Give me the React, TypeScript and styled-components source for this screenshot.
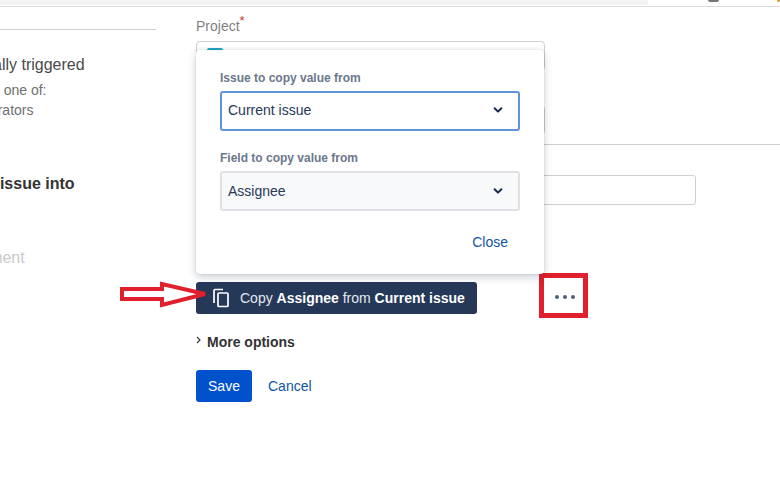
import React from "react";
import styled, { createGlobalStyle } from "styled-components";

const Global = createGlobalStyle`
  html, body { margin: 0; padding: 0; background: #fff; }
  body { font-family: "Liberation Sans", Arial, sans-serif; color: #172b4d; }
`;
const Page = styled.div`
  width: 780px; height: 492px; overflow: hidden; position: relative; background: #fff;
`;
const TopBar = styled.div`
  height: 6px; border-bottom: 1px solid #dcdcdc; display: flex; justify-content: space-between;
`;
const TopStrip = styled.div`width: 648px; height: 5px; background: #f2f2f2;`;
const TopMarks = styled.div`display: flex; gap: 58px; width: 72px; justify-content: flex-end;`;
const TopMark = styled.span<{ $c: string; $w: number }>`
  width: ${p => p.$w}px; height: 2px; background: ${p => p.$c}; border-radius: 0 0 6px 6px;
`;
const Columns = styled.div`display: grid; grid-template-columns: 156px 1fr; column-gap: 40px;`;
const Side = styled.aside`overflow: hidden; padding-top: 22px;`;
const SideRule = styled.div`height: 1px; background: #d0d0d0; margin-bottom: 25px;`;
const SideText = styled.div<{ $size: number; $h: number; $c: string; $b?: boolean; $mt?: number; $ml: number }>`
  font-size: ${p => p.$size}px; line-height: ${p => p.$h}px; color: ${p => p.$c};
  font-weight: ${p => (p.$b ? 700 : 400)}; margin-top: ${p => p.$mt ?? 0}px; margin-left: ${p => p.$ml}px;
  white-space: nowrap;
`;
const Main = styled.main`position: relative; padding-top: 9px; height: 470px;`;
const Label = styled.div`font-size: 14px; line-height: 20px; color: #7f7f7f; height: 25px;`;
const Req = styled.sup`color: #c0392b; font-size: 13px; line-height: 0;`;
const OuterSelect = styled.div<{ $mt?: number; $h: number }>`
  width: 349px; height: ${p => p.$h}px; box-sizing: border-box; border: 1px solid #cfcfcf; border-radius: 4px;
  margin-top: ${p => p.$mt ?? 0}px; position: relative;
`;
const TealMark = styled.span`position: absolute; left: 10px; top: 6px; width: 16px; height: 3px; background: #1fa5c4; border-radius: 2px 2px 0 0;`;
const Divider = styled.div`height: 1px; background: #cfcfcf; margin-top: 9px;`;
const TextInput = styled.div`
  width: 500px; height: 30px; box-sizing: border-box; border: 1px solid #cfcfcf; border-radius: 3px; margin-top: 30px;
`;
const ButtonRow = styled.div`display: flex; align-items: center; margin-top: 77px; position: relative; height: 32px;`;
const CopyButton = styled.button`
  width: 281px; height: 32px; border: 0; border-radius: 3px; background: #253858; color: #e4e9f1; padding: 0 0 0 16px;
  display: flex; align-items: center; gap: 10px; font: 14px/20px "Liberation Sans", Arial, sans-serif; white-space: nowrap;
  b { color: #fff; font-weight: 700; }
`;
const Dots = styled.div`display: flex; gap: 4px; margin-left: 78px; margin-top: -2px; align-items: center;`;
const Dot = styled.span`width: 4px; height: 4px; border-radius: 50%; background: #505f79;`;
const RedBox = styled.div`
  position: absolute; left: 343px; top: -9px; width: 49px; height: 45px; box-sizing: border-box; border: 5px solid #e0202c;
`;
const ArrowMark = styled.svg`position: absolute; left: -76px; top: -1px;`;
const MoreRow = styled.div`
  display: flex; align-items: center; gap: 6px; margin-top: 18px; height: 20px; color: #333;
  font-size: 14px; font-weight: 700;
`;
const Actions = styled.div`display: flex; align-items: center; gap: 16px; margin-top: 18px;`;
const SaveButton = styled.button`
  width: 56px; height: 32px; border: 0; border-radius: 3px; background: #0052cc; color: #fff;
  font: 14px "Liberation Sans", Arial, sans-serif; padding: 0;
`;
const LinkText = styled.span`color: #0f55a8; font-size: 14px;`;
const Popover = styled.div`
  position: absolute; left: 0; top: 43px; width: 348px; height: 224px; box-sizing: border-box; background: #fff;
  border-radius: 4px; box-shadow: 0 3px 8px rgba(9,30,66,.22), 0 0 2px rgba(9,30,66,.14); padding: 20px 24px 0;
  display: flex; flex-direction: column;
`;
const PopLabel = styled.div<{ $mt?: number }>`
  font-size: 12px; font-weight: 700; line-height: 16px; color: #6b778c; margin-top: ${p => p.$mt ?? 0}px; margin-bottom: 5px;
`;
const PopSelect = styled.div<{ $focus?: boolean }>`
  width: 300px; height: 40px; box-sizing: border-box; border-radius: 3px; display: flex; align-items: center; justify-content: space-between;
  padding: ${p => (p.$focus ? "0 15px 2px 6px" : "0 15px 0 6px")}; font-size: 14px; color: #253858;
  background: ${p => (p.$focus ? "#fff" : "#f7f9fb")};
  border: 2px solid ${p => (p.$focus ? "#5b95dc" : "#dfe1e6")};
`;
const CloseRow = styled.div`display: flex; justify-content: flex-end; margin-top: 23px; padding-right: 12px;`;

const Chevron = () => (
  <svg width="10" height="10" viewBox="0 0 10 10" fill="none">
    <path d="M1.6 3.2 5 6.6l3.4-3.4" stroke="#172b4d" strokeWidth="2" strokeLinecap="round" strokeLinejoin="round" />
  </svg>
);

export default function App() {
  return (
    <Page>
      <Global />
      <TopBar>
        <TopStrip />
        <TopMarks>
          <TopMark $c="#777" $w={12} />
          <TopMark $c="#e0a030" $w={3} />
        </TopMarks>
      </TopBar>
      <Columns>
        <Side>
          <SideRule />
          <SideText $size={16} $h={20} $c="#4a4a4a" $ml={-47}>Manually triggered</SideText>
          <SideText $size={14} $h={20} $c="#6f6f6f" $mt={5} $ml={-50}>Must be one of:</SideText>
          <SideText $size={14} $h={20} $c="#6f6f6f" $ml={-56}>Administrators</SideText>
          <SideText $size={16} $h={20} $c="#333" $b $mt={54} $ml={-49}>Clone issue into</SideText>
          <SideText $size={16} $h={20} $c="#c8c8c8" $mt={54} $ml={-74}>Add comment</SideText>
        </Side>
        <Main>
          <Label>Project<Req>*</Req></Label>
          <OuterSelect $h={30}><TealMark /></OuterSelect>
          <OuterSelect $h={30} $mt={34} />
          <Divider />
          <TextInput />
          <ButtonRow>
            <ArrowMark width="90" height="28" viewBox="0 0 90 28">
              <path d="M2 8h40V3l43 10-43 11v-6H2z" fill="#fff" stroke="#e0202c" strokeWidth="4" />
            </ArrowMark>
            <CopyButton>
              <svg width="18" height="20" viewBox="0 0 18 20" fill="none" stroke="#fff" strokeWidth="1.7">
                <path d="M2 15V2.5a1 1 0 0 1 1-1h8" />
                <rect x="6" y="5" width="10" height="13.5" rx="1" />
              </svg>
              <span>Copy <b>Assignee</b> from <b>Current issue</b></span>
            </CopyButton>
            <Dots><Dot /><Dot /><Dot /></Dots>
            <RedBox />
          </ButtonRow>
          <MoreRow>
            <svg width="5" height="8" viewBox="0 0 5 8" fill="none" style={{ marginTop: -5 }}>
              <path d="M1 1l3 3-3 3" stroke="#333" strokeWidth="1.1" />
            </svg>
            More options
          </MoreRow>
          <Actions>
            <SaveButton>Save</SaveButton>
            <LinkText>Cancel</LinkText>
          </Actions>
          <Popover>
            <PopLabel>Issue to copy value from</PopLabel>
            <PopSelect $focus>Current issue<Chevron /></PopSelect>
            <PopLabel $mt={19}>Field to copy value from</PopLabel>
            <PopSelect>Assignee<Chevron /></PopSelect>
            <CloseRow><LinkText>Close</LinkText></CloseRow>
          </Popover>
        </Main>
      </Columns>
    </Page>
  );
}
